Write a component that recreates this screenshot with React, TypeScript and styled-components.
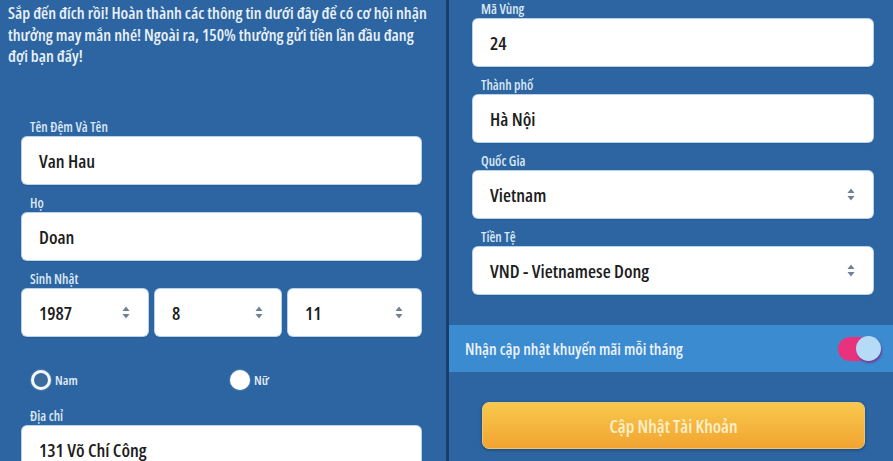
import React from "react";
import styled, { createGlobalStyle } from "styled-components";

const FONT = `"Open Sans", "DejaVu Sans Condensed", sans-serif`;

const Global = createGlobalStyle`
  html, body { margin: 0; padding: 0; background: #2c65a1; }
  #root { width: 893px; height: 461px; overflow: hidden; }
  * { box-sizing: border-box; }
`;

const Page = styled.div`
  display: flex;
  width: 893px;
  height: 461px;
  background: #2c65a1;
  font-family: ${FONT};
  font-stretch: 75%;
  font-weight: 600;
`;

const LeftPanel = styled.div`
  width: 446px;
  flex: none;
  padding: 2px 15px 0 8px;
`;

const Divider = styled.div`
  width: 3px;
  flex: none;
  background: #173e6c;
`;

const RightPanel = styled.div`
  flex: 1;
  display: flex;
  flex-direction: column;
`;

const Intro = styled.p`
  margin: 0;
  color: #e9f0f8;
  font-size: 16.5px;
  line-height: 21.5px;
  white-space: nowrap;
`;

const Form = styled.div<{ $pl: number; $pr: number; $pt: number }>`
  display: flex;
  flex-direction: column;
  padding: ${(p) => p.$pt}px ${(p) => p.$pr}px 0 ${(p) => p.$pl}px;
`;

const Field = styled.div`
  display: flex;
  flex-direction: column;
  margin-bottom: 9px;
`;

const Label = styled.div`
  color: #dbe7f4;
  font-size: 13.5px;
  line-height: 20px;
  padding-left: 8px;
`;

const Box = styled.div`
  height: 47px;
  background: #ffffff;
  border-radius: 5px;
  box-shadow: 0 0 0 1px #b9d3ec, 0 1px 2px rgba(10, 30, 60, 0.4);
  display: flex;
  align-items: center;
  justify-content: space-between;
  padding: 0 18px 0 17px;
  color: #1d1d1d;
  font-size: 18.5px;
`;

const DateRow = styled.div`
  display: grid;
  grid-template-columns: 126px 126px 133px;
  gap: 7px;
`;

const Arrows = () => (
  <svg width="8" height="13" viewBox="0 0 8 13">
    <path d="M4 0.5 L7.5 5 L0.5 5 Z" fill="#6f8194" />
    <path d="M4 12.5 L7.5 8 L0.5 8 Z" fill="#6f8194" />
  </svg>
);

const RadioRow = styled.div`
  display: grid;
  grid-template-columns: 199px 1fr;
  padding: 25px 0 16px 9px;
`;

const RadioItem = styled.div`
  display: flex;
  align-items: center;
  gap: 4px;
  color: #e3ecf6;
  font-size: 13px;
`;

const RadioDot = styled.span<{ $checked: boolean }>`
  width: 20px;
  height: 20px;
  border-radius: 50%;
  background: ${(p) => (p.$checked ? "#3a6c9f" : "#ffffff")};
  border: ${(p) => (p.$checked ? "3.5px solid #f4f8fc" : "none")};
  box-shadow: 0 0 2px rgba(255, 255, 255, 0.5);
`;

const ToggleRow = styled.div`
  margin-top: 22px;
  height: 47px;
  background: #3b8bd0;
  display: flex;
  align-items: center;
  justify-content: space-between;
  padding: 0 12px 0 16px;
  color: #eaf2fa;
  font-size: 16px;
`;

const Toggle = styled.div`
  position: relative;
  width: 43px;
  height: 26px;
`;

const Track = styled.span`
  position: absolute;
  left: 0;
  top: 1px;
  width: 40px;
  height: 24px;
  border-radius: 12px;
  background: #e8327e;
`;

const Knob = styled.span`
  position: absolute;
  right: 0;
  top: 0;
  width: 25px;
  height: 25px;
  border-radius: 50%;
  background: #b6dbf6;
  box-shadow: 1px 2px 2px #6c3f9c;
`;

const ButtonWrap = styled.div`
  padding: 30px 28px 0 33px;
`;

const Button = styled.div`
  height: 47px;
  border-radius: 7px;
  border: 1px solid #e9c777;
  background: linear-gradient(#f8c84c, #f2a431);
  box-shadow: 0 1px 3px rgba(10, 30, 60, 0.45);
  display: flex;
  align-items: center;
  justify-content: center;
  color: #fcefc9;
  font-size: 18px;
`;

export default function App() {
  return (
    <>
      <Global />
      <Page>
        <LeftPanel>
          <Intro>
            Sắp đến đích rồi! Hoàn thành các thông tin dưới đây để có cơ hội nhận
            <br />
            thưởng may mắn nhé! Ngoài ra, 150% thưởng gửi tiền lần đầu đang
            <br />
            đợi bạn đấy!
          </Intro>
          <Form $pl={14} $pr={10} $pt={50}>
            <Field>
              <Label>Tên Đệm Và Tên</Label>
              <Box>Van Hau</Box>
            </Field>
            <Field>
              <Label>Họ</Label>
              <Box>Doan</Box>
            </Field>
            <Field>
              <Label>Sinh Nhật</Label>
              <DateRow>
                <Box>
                  1987 <Arrows />
                </Box>
                <Box>
                  8 <Arrows />
                </Box>
                <Box>
                  11 <Arrows />
                </Box>
              </DateRow>
            </Field>
            <RadioRow>
              <RadioItem>
                <RadioDot $checked={true} />
                Nam
              </RadioItem>
              <RadioItem>
                <RadioDot $checked={false} />
                Nữ
              </RadioItem>
            </RadioRow>
            <Field>
              <Label>Địa chỉ</Label>
              <Box>131 Võ Chí Công</Box>
            </Field>
          </Form>
        </LeftPanel>
        <Divider />
        <RightPanel>
          <Form $pl={24} $pr={20} $pt={0}>
            <Field style={{ marginTop: -1 }}>
              <Label>Mã Vùng</Label>
              <Box>24</Box>
            </Field>
            <Field>
              <Label>Thành phố</Label>
              <Box>Hà Nội</Box>
            </Field>
            <Field>
              <Label>Quốc Gia</Label>
              <Box>
                Vietnam <Arrows />
              </Box>
            </Field>
            <Field>
              <Label>Tiền Tệ</Label>
              <Box>
                VND - Vietnamese Dong <Arrows />
              </Box>
            </Field>
          </Form>
          <ToggleRow>
            Nhận cập nhật khuyến mãi mỗi tháng
            <Toggle>
              <Track />
              <Knob />
            </Toggle>
          </ToggleRow>
          <ButtonWrap>
            <Button>Cập Nhật Tài Khoản</Button>
          </ButtonWrap>
        </RightPanel>
      </Page>
    </>
  );
}
